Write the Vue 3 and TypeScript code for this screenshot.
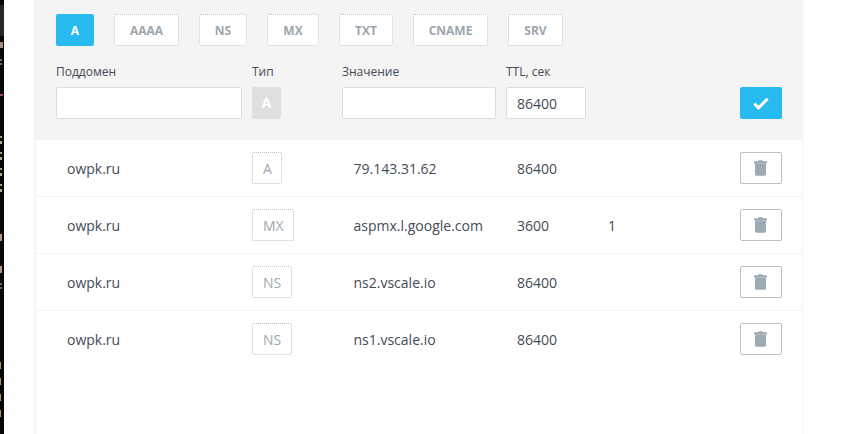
<script setup lang="ts">
import { ref } from 'vue'

interface DnsRecord {
  id: number
  name: string
  type: string
  value: string
  ttl: number
  priority?: number
}

const types: string[] = ['A', 'AAAA', 'NS', 'MX', 'TXT', 'CNAME', 'SRV']
const selected = ref('A')
const subdomain = ref('')
const value = ref('')
const ttl = ref('86400')

const records = ref<DnsRecord[]>([
  { id: 1, name: 'owpk.ru', type: 'A', value: '79.143.31.62', ttl: 86400 },
  { id: 2, name: 'owpk.ru', type: 'MX', value: 'aspmx.l.google.com', ttl: 3600, priority: 1 },
  { id: 3, name: 'owpk.ru', type: 'NS', value: 'ns2.vscale.io', ttl: 86400 },
  { id: 4, name: 'owpk.ru', type: 'NS', value: 'ns1.vscale.io', ttl: 86400 },
])

function removeRecord(id: number): void {
  records.value = records.value.filter((r) => r.id !== id)
}

// Bright fragments on the dark edge: [y, height, width, colour]
const specks: [number, number, number, string][] = [
  [42, 6, 3, '#a39184'],
  [59, 2, 2, '#77716c'],
  [63, 2, 2, '#77716c'],
  [94, 2, 3, '#94515d'],
  [136, 2, 2, '#a69c83'],
  [141, 3, 2, '#b5aa8e'],
  [152, 2, 2, '#a69c83'],
  [157, 3, 2, '#b5aa8e'],
  [168, 2, 2, '#a69c83'],
  [173, 3, 2, '#b5aa8e'],
  [184, 2, 2, '#a69c83'],
  [189, 3, 2, '#b5aa8e'],
  [234, 7, 2, '#b69379'],
  [266, 7, 2, '#b69379'],
  [283, 2, 2, '#716c69'],
  [287, 2, 2, '#716c69'],
  [362, 7, 1, '#b69068'],
  [378, 7, 1, '#b69068'],
  [394, 7, 1, '#b69068'],
  [410, 7, 1, '#b69068'],
]
</script>

<template>
  <div class="screen">
    <svg class="edge" width="4" height="434" aria-hidden="true">
      <rect width="4" height="434" fill="#080607" />
      <rect y="5" width="4" height="31" fill="#272727" />
      <rect
        v-for="[y, h, w, color] in specks"
        :key="y"
        :y="y"
        :width="w"
        :height="h"
        :fill="color"
      />
    </svg>

    <main class="panel">
      <section class="editor">
        <nav class="tabs">
          <button
            v-for="t in types"
            :key="t"
            class="tab"
            :class="{ active: t === selected }"
            @click="selected = t"
          >{{ t }}</button>
        </nav>

        <form class="columns form" @submit.prevent>
          <label class="field">
            <span class="label">Поддомен</span>
            <input v-model="subdomain" class="input" type="text" />
          </label>
          <div class="field">
            <span class="label">Тип</span>
            <span class="current">{{ selected }}</span>
          </div>
          <label class="field">
            <span class="label">Значение</span>
            <input v-model="value" class="input" type="text" />
          </label>
          <label class="field">
            <span class="label">TTL, сек</span>
            <input v-model="ttl" class="input" type="text" />
          </label>
          <button class="save" type="submit" aria-label="Сохранить">
            <svg width="16" height="13" viewBox="0 0 16 13">
              <path d="M1.3 6.6 5.6 10.8 14.6 1.8" fill="none" stroke="#fff" stroke-width="3" />
            </svg>
          </button>
        </form>
      </section>

      <ul class="records">
        <li v-for="r in records" :key="r.id" class="columns record">
          <span class="cell">{{ r.name }}</span>
          <span class="badge">{{ r.type }}</span>
          <span class="cell value">{{ r.value }}</span>
          <span class="cell">{{ r.ttl }}</span>
          <span class="cell priority">{{ r.priority }}</span>
          <button class="remove" aria-label="Удалить" @click="removeRecord(r.id)">
            <svg width="13" height="16" viewBox="0 0 13 16">
              <path
                d="M0 2Q0 1.2 1 1.2H4Q4.2 0.2 5 0.2H8Q8.8 0.2 9 1.2H12Q13 1.2 13 2V3.4H0ZM1 3.8H12V14.2Q12 15.8 10.4 15.8H2.6Q1 15.8 1 14.2Z"
                fill="#9baab3"
              />
            </svg>
          </button>
        </li>
      </ul>
    </main>
  </div>
</template>

<style>
body {
  background: #fff;
}
</style>

<style scoped>
.screen {
  display: flex;
  width: 843px;
  height: 434px;
  overflow: hidden;
  background: #fefefe;
  color: #454b57;
  font-family: 'Open Sans', 'Noto Sans', sans-serif;
  font-size: 14px;
}

.edge {
  display: block;
  flex: none;
}

.panel {
  box-sizing: border-box;
  width: 769px;
  margin-left: 30px;
  border: solid #f4f4f4;
  border-width: 0 1px 0 2px;
  background: #fff;
}

.editor {
  box-sizing: border-box;
  height: 140px;
  padding: 14px 20px 0;
  background: #f4f4f4;
}

button,
input {
  box-sizing: border-box;
  margin: 0;
  font-family: inherit;
}

.tabs {
  display: grid;
  grid-template-columns: 38px 65px 48px 52px 54px 75px 55px;
  gap: 20px;
}

.tab {
  height: 32px;
  padding: 1px 0 0;
  border: 1px dotted #c3c8cb;
  border-radius: 2px;
  background: #fff;
  color: #9ca6ad;
  font-size: 12px;
  font-weight: 700;
}

.tab.active {
  padding: 0;
  border: 0;
  background: #27baf0;
  color: #fff;
}

.columns {
  display: grid;
  grid-template-columns: 186px 80px 154px 80px 134px 42px;
  column-gap: 10px;
}

.form {
  align-items: end;
  margin-top: 18px;
}

.field {
  display: flex;
  flex-direction: column;
  align-items: flex-start;
}

.label {
  height: 23px;
  font-size: 12px;
  line-height: 16px;
}

.input {
  width: 100%;
  height: 32px;
  padding: 0 10px;
  border: 1px solid #dadcdd;
  border-radius: 2px;
  outline: 0;
  background: #fff;
  color: #454b57;
  font-size: 14px;
}

.current {
  box-sizing: border-box;
  width: 29px;
  height: 32px;
  border-radius: 2px;
  background: #dfdfdf;
  color: #fff;
  font-size: 14px;
  font-weight: 700;
  line-height: 32px;
  text-align: center;
}

.save,
.remove {
  display: flex;
  grid-column: 6;
  align-items: center;
  justify-content: center;
  width: 42px;
  height: 32px;
  padding: 0;
  border: 0;
  border-radius: 2px;
  background: #27baf0;
}

.remove {
  padding-right: 1px;
  border: 1px solid #bbc0c4;
  background: #fff;
}

.records {
  margin: 0;
  padding: 0;
  list-style: none;
}

.record {
  box-sizing: border-box;
  align-items: center;
  height: 57px;
  padding: 0 20px;
  border-bottom: 1px solid #f3f3f3;
}

.record:last-child {
  border-bottom-color: transparent;
}

.cell {
  padding: 2px 0 0 11px;
  line-height: 20px;
  white-space: nowrap;
}

.cell.value {
  padding-left: 11.5px;
}

.cell.priority {
  padding-left: 12px;
}

.badge {
  box-sizing: border-box;
  justify-self: start;
  height: 32px;
  padding: 0 9.6px 0 10px;
  border: 1px dotted #bcc3c8;
  border-radius: 2px;
  color: #a1a9b0;
  line-height: 31px;
}
</style>
